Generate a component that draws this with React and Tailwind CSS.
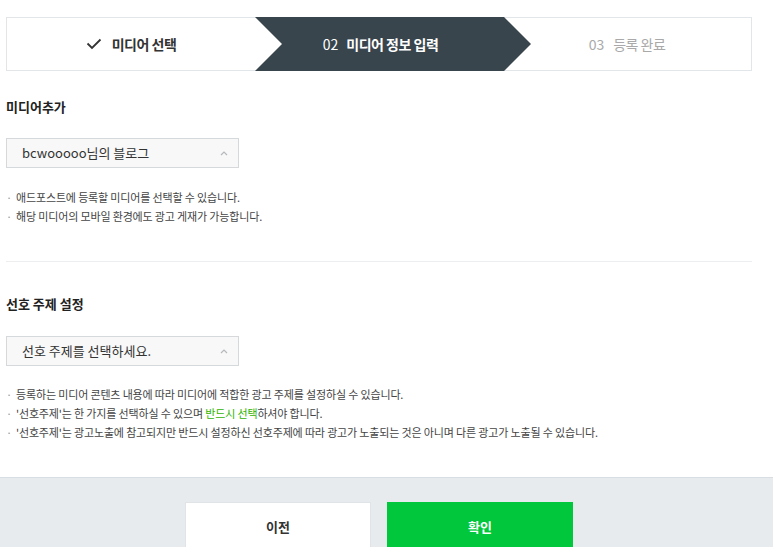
import React from 'react'

const FONT = { fontFamily: '"Noto Sans CJK KR", "Noto Sans", sans-serif' }

const Caret = () => (
    <svg width="8" height="5" viewBox="0 0 8 5" className="text-[#b5b9bc]">
        <path d="M1 4 L4 1 L7 4" fill="none" stroke="currentColor" strokeWidth="1.2" />
    </svg>
)

const Stepper = () => (
    <div className="grid grid-cols-3 h-[54px] border border-[#e3e6e8] bg-white">
        <div className="flex items-center justify-center gap-[10px] text-[14px] font-bold text-[#333]">
            <svg width="16" height="12" viewBox="0 0 16 12">
                <path d="M1.5 5.5 L6 10 L14.5 1.5" fill="none" stroke="#333" strokeWidth="1.8" />
            </svg>
            <span className="tracking-[-0.5px]">미디어 선택</span>
        </div>
        <div className="relative flex items-center justify-center text-[14px] font-bold text-white">
            {/* dark arrow shape */}
            <svg className="absolute left-0 top-[-1px] z-0" width="276" height="54" viewBox="0 0 276 54">
                <polygon points="0,0 249,0 276,27 249,54 0,54 27,27" fill="#39454d" />
            </svg>
            <span className="relative z-10 pl-[3px]">
                <span className="font-normal">02</span>
                <span className="ml-[8px] tracking-[-0.5px]">미디어 정보 입력</span>
            </span>
        </div>
        <div className="flex items-center justify-center text-[14px] text-[#a9a9a9]">
            <span>03</span>
            <span className="ml-[9px] tracking-[-0.5px]">등록 완료</span>
        </div>
    </div>
)

const SelectBox = ({ label }) => (
    <div className="w-[233px] h-[30px] flex items-center justify-between border border-[#d5d9dc] bg-[#f8f8f8] pl-[15px] pr-[10px]">
        <span className="text-[13px] text-[#333]">{label}</span>
        <Caret />
    </div>
)

const Bullets = ({ items }) => (
    <ul className="flex flex-col text-[11px] leading-[19px] text-[#444] tracking-[-0.15px]">
        {items.map((item, i) => (
            <li key={i} className="flex">
                <span className="w-[10px] text-[#999]">·</span>
                <span>{item}</span>
            </li>
        ))}
    </ul>
)

export default function App() {
    return (
        <div className="w-[773px] h-[547px] overflow-hidden bg-white flex flex-col" style={FONT}>
            <div className="pl-[6px] pr-[21px] pt-[17px]">
                <Stepper />

                {/* 미디어추가 */}
                <h3 className="mt-[26px] text-[13px] font-bold text-[#222] leading-[20px]">미디어추가</h3>
                <div className="mt-[21px]">
                    <SelectBox label="bcwooooo님의 블로그" />
                </div>
                <div className="mt-[20px]">
                    <Bullets items={[
                        '애드포스트에 등록할 미디어를 선택할 수 있습니다.',
                        '해당 미디어의 모바일 환경에도 광고 게재가 가능합니다.',
                    ]} />
                </div>

                <div className="mt-[35px] border-t border-[#eceef0]" />

                {/* 선호 주제 설정 */}
                <h3 className="mt-[32px] text-[13px] font-bold text-[#222] leading-[20px]">선호 주제 설정</h3>
                <div className="mt-[22px]">
                    <SelectBox label="선호 주제를 선택하세요." />
                </div>
                <div className="mt-[19px]">
                    <Bullets items={[
                        '등록하는 미디어 콘텐츠 내용에 따라 미디어에 적합한 광고 주제를 설정하실 수 있습니다.',
                        <>'선호주제'는 한 가지를 선택하실 수 있으며 <span className="text-[#2db400]">반드시 선택</span>하셔야 합니다.</>,
                        "'선호주제'는 광고노출에 참고되지만 반드시 설정하신 선호주제에 따라 광고가 노출되는 것은 아니며 다른 광고가 노출될 수 있습니다.",
                    ]} />
                </div>
            </div>

            {/* footer */}
            <div className="mt-auto h-[70px] border-t border-[#d9dee2] bg-[#e7ebee] pl-[6px] pr-[21px] pt-[24px] flex justify-center gap-[16px]">
                <button className="w-[186px] h-[50px] bg-white border border-[#e0e4e7] text-[13px] font-bold text-[#333]">이전</button>
                <button className="w-[186px] h-[50px] bg-[#00c73c] text-[13px] font-bold text-white">확인</button>
            </div>
        </div>
    )
}
